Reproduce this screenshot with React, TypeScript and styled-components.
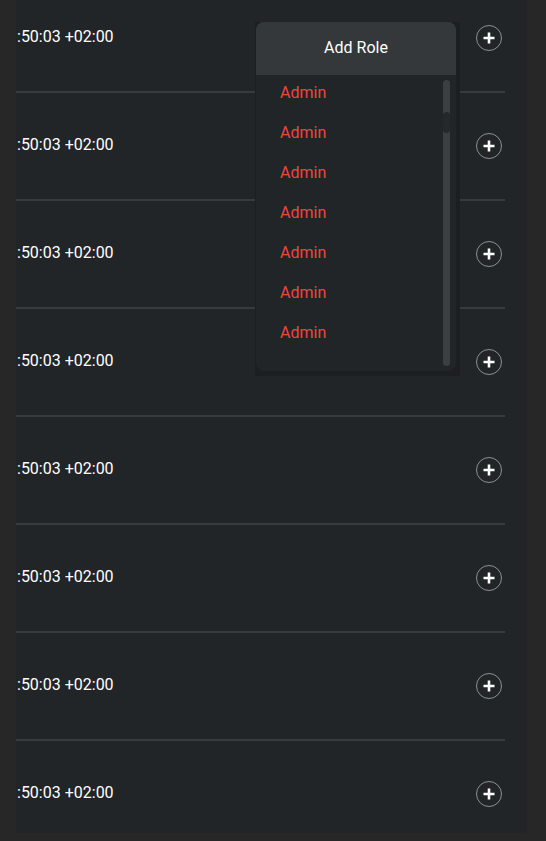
import React from "react";
import styled, { createGlobalStyle } from "styled-components";

const Global = createGlobalStyle`
  html, body { margin: 0; padding: 0; background: #272727; overflow: hidden; }
  body { font-family: Roboto, "Liberation Sans", sans-serif; }
`;

const Page = styled.div`
  position: relative;
  width: 546px;
  height: 841px;
  padding-left: 16px;
  box-sizing: border-box;
`;

const Panel = styled.div`
  width: 511px;
  height: 833px;
  background: #222528;
  overflow: hidden;
`;

const List = styled.div`
  margin-top: -15px;
  width: 489px;
  display: flex;
  flex-direction: column;
`;

const Row = styled.div`
  height: 106px;
  border-bottom: 2px solid #383b3e;
  display: flex;
  align-items: center;
  justify-content: space-between;
  padding-right: 3px;
`;

const Stamp = styled.span`
  color: #ffffff;
  font-size: 16px;
  line-height: 19px;
  margin-bottom: 4px;
  margin-left: 1px;
`;

const PlusButton = styled.button`
  width: 26px;
  height: 26px;
  border-radius: 50%;
  border: 1px solid #8d8f91;
  background: transparent;
  padding: 0;
  display: flex;
  align-items: center;
  justify-content: center;
  box-sizing: border-box;
`;

const Backing = styled.div`
  position: absolute;
  left: 255px;
  top: 22px;
  background: #1c1e21;
  padding: 0 4px 5px 1px;
`;

const Menu = styled.div`
  width: 200px;
  height: 349px;
  background: #222528;
  border-radius: 8px;
  overflow: hidden;
  position: relative;
  display: flex;
  flex-direction: column;
`;

const MenuHeader = styled.div`
  height: 53px;
  background: #35383b;
  color: #ffffff;
  font-size: 16px;
  font-weight: 400;
  display: flex;
  align-items: center;
  justify-content: center;
  padding-bottom: 2px;
  box-sizing: border-box;
  flex: none;
`;

const MenuItem = styled.div`
  height: 40px;
  flex: none;
  display: flex;
  align-items: center;
  padding: 0 24px 6px;
  box-sizing: border-box;
  color: #f0463a;
  font-size: 16px;
`;

const Track = styled.div`
  position: absolute;
  right: 6px;
  top: 58px;
  width: 7px;
  height: 286px;
  border-radius: 3.5px;
  background: #3c3f42;
`;

const Thumb = styled.div`
  margin-top: 32px;
  height: 21px;
  border-radius: 3.5px;
  background: #25282b;
`;

const Plus = () => (
  <svg width="14" height="14" viewBox="0 0 14 14">
    <path d="M7 1.5V12.5M1.5 7H12.5" stroke="#ffffff" strokeWidth="2.6" />
  </svg>
);

export default function App() {
  const rows = Array.from({ length: 8 });
  const items = Array.from({ length: 7 });
  return (
    <>
      <Global />
      <Page>
        <Panel>
          <List>
            {rows.map((_, i) => (
              <Row key={i}>
                <Stamp>:50:03 +02:00</Stamp>
                <PlusButton aria-label="add">
                  <Plus />
                </PlusButton>
              </Row>
            ))}
          </List>
        </Panel>
        <Backing>
          <Menu>
            <MenuHeader>Add Role</MenuHeader>
            {items.map((_, i) => (
              <MenuItem key={i}>Admin</MenuItem>
            ))}
            <Track>
              <Thumb />
            </Track>
          </Menu>
        </Backing>
      </Page>
    </>
  );
}
